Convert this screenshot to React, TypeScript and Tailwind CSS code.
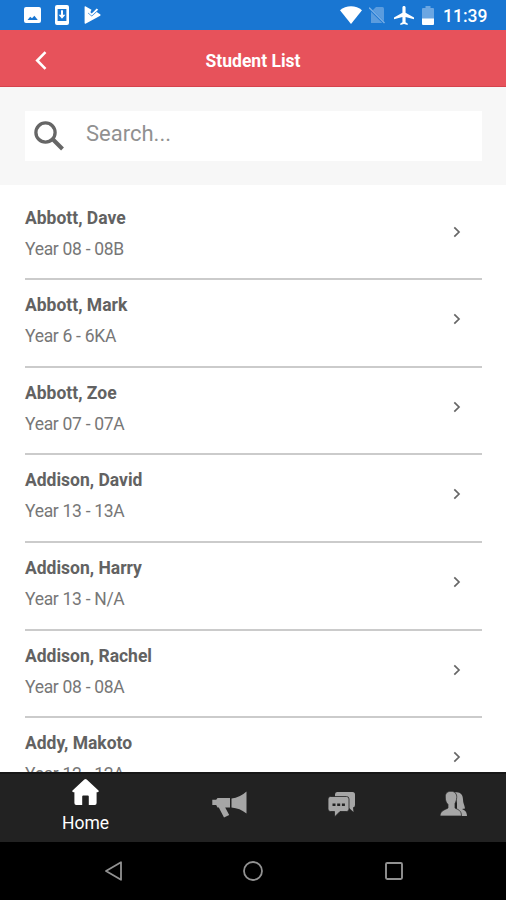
import type { ReactNode } from 'react'

type Student = {
  name: string
  group: string
}

const students: Student[] = [
  { name: 'Abbott, Dave', group: 'Year 08 - 08B' },
  { name: 'Abbott, Mark', group: 'Year 6 - 6KA' },
  { name: 'Abbott, Zoe', group: 'Year 07 - 07A' },
  { name: 'Addison, David', group: 'Year 13 - 13A' },
  { name: 'Addison, Harry', group: 'Year 13 - N/A' },
  { name: 'Addison, Rachel', group: 'Year 08 - 08A' },
  { name: 'Addy, Makoto', group: 'Year 12 - 12A' },
]

function StatusBar() {
  return (
    <div className="flex h-[30px] shrink-0 items-start justify-between bg-[#1976d2] pl-6 pr-[19px] pt-[5px] text-white">
      <div className="flex items-start">
        <svg className="mt-0.5 h-4 w-[17px]" viewBox="0 0 17 16" fill="currentColor">
          <path
            fillRule="evenodd"
            d="M2 0h13a2 2 0 0 1 2 2v12a2 2 0 0 1-2 2H2a2 2 0 0 1-2-2V2a2 2 0 0 1 2-2ZM3.500 13h10.300L10.400 8.800 8 11.300 6.200 9.700Z"
          />
        </svg>
        <svg className="ml-3.5 h-5 w-3.5" viewBox="0 0 14 20" fill="currentColor">
          <path
            fillRule="evenodd"
            d="M2 0h10a2 2 0 0 1 2 2v16a2 2 0 0 1-2 2H2a2 2 0 0 1-2-2V2a2 2 0 0 1 2-2ZM2.600 4v12h8.800V4Z"
          />
          <path d="M6 5.200h2v4.600h2.400L7 13.800 3.600 9.800H6Z" />
        </svg>
        <svg className="ml-[15px] mt-px h-[18px] w-[17px]" viewBox="0 0 17 18" fill="currentColor">
          <path d="M1.300.2 7.500 3.800 5.800 7.500 8 9.200 12.800 4.800 13.300 6.600 16.200 8.300Q17 9 16.200 9.700L1.500 17.800Q.6 18 .6 17V1Q.6 0 1.300.2Z" />
          <path d="m4.300 6.600 3.400 3L13.900 4" fill="none" stroke="#1976d2" strokeWidth="1.300" />
          <path d="m5 5 2.700 2.500 5-5 1.500 1.300-6.500 6-4-3.500Z" />
        </svg>
      </div>
      <div className="flex items-start">
        <svg className="mt-px h-[18px] w-[22px]" viewBox="0 0 22 18" fill="currentColor">
          <path d="M11 18 0 4.200C5.800-1.200 16.200-1.200 22 4.200Z" />
        </svg>
        <svg className="ml-[7px] mt-0.5 h-[17px] w-4" viewBox="0 0 16 17">
          <path d="M7 0h6.500A1.500 1.500 0 0 1 15 1.500V16H2V5Z" fill="#5b9cde" />
          <path d="M0 1 16 17" stroke="#1976d2" strokeWidth="2.400" />
          <path d="M0 .500 15.500 16" stroke="#79afe5" strokeWidth="1.400" />
        </svg>
        <svg className="ml-[9px] mt-px h-[19px] w-5" viewBox="2 2 19 20" preserveAspectRatio="none" fill="currentColor">
          <path d="M21 16v-2l-8-5V3.500c0-.830-.670-1.500-1.500-1.500S10 2.670 10 3.500V9l-8 5v2l8-2.500V19l-2 1.500V22l3.500-1 3.500 1v-1.500L13 19v-5.500l8 2.500z" />
        </svg>
        <svg className="ml-2 mt-px h-[19px] w-3" viewBox="0 0 12 19">
          <path d="M3.500 0h5v2H11a1 1 0 0 1 1 1v10H0V3a1 1 0 0 1 1-1h2.500Z" fill="#6ba6e2" />
          <path d="M0 12.500h12V18a1 1 0 0 1-1 1H1a1 1 0 0 1-1-1Z" fill="currentColor" />
        </svg>
        <span className="ml-[9px] mt-px w-11 whitespace-nowrap text-[17.500px] font-medium leading-5">11:39</span>
      </div>
    </div>
  )
}

function Header() {
  return (
    <header className="grid h-[57px] shrink-0 grid-cols-[1fr_auto_1fr] items-center border-b border-[#d5434d] bg-[#e7525b] pt-1 text-white">
      <svg className="ml-[35px] h-[19px] w-3" viewBox="0 0 12 19" fill="none" stroke="currentColor" strokeWidth="2.600">
        <path d="M10.500 1.200 2.200 9.500 10.500 17.800" />
      </svg>
      <h1 className="pt-0.5 text-[17.500px] font-bold leading-5">Student List</h1>
      <span />
    </header>
  )
}

function SearchBar() {
  return (
    <div className="h-[98px] shrink-0 bg-[#f7f7f7] pl-[25px] pr-6 pt-6">
      <div className="flex h-[50px] items-center bg-white">
        <svg className="ml-[9px] h-[30px] w-[31px]" viewBox="0 0 31 30" fill="none" stroke="#666">
          <circle cx="11.500" cy="11.500" r="9.600" strokeWidth="3.300" />
          <path d="m18.500 18 10 10" strokeWidth="4" />
        </svg>
        <span className="mb-1 ml-[21px] text-[22px] leading-7 text-[#919191]">Search...</span>
      </div>
    </div>
  )
}

function StudentRow({ name, group }: Student) {
  return (
    <li className="flex h-[87.650px] shrink-0 items-start justify-between border-b-2 border-[#cbcbcb]">
      <div className="pt-3.5">
        <p className="text-[17.500px] font-bold leading-[22px] text-[#626262]">{name}</p>
        <p className="mt-[9px] text-[17.500px] leading-[22px] tracking-[-0.3px] text-[#777]">{group}</p>
      </div>
      <svg className="mr-[21px] mt-[33px] h-3 w-2" viewBox="0 0 8 12" fill="none" stroke="#666" strokeWidth="1.700">
        <path d="m1.300 1.300 4.700 4.700-4.700 4.700" />
      </svg>
    </li>
  )
}

function Tab({ children, className }: { children: ReactNode; className: string }) {
  return <div className={`flex shrink-0 flex-col items-center text-[#a6a6a6] ${className}`}>{children}</div>
}

function TabBar() {
  return (
    <nav className="flex h-[70px] shrink-0 border-t-2 border-[#171717] bg-[#222]">
      <Tab className="w-[171px] pt-[5px] text-white">
        <svg className="h-[26px] w-[27px]" viewBox="0 0 27 26" fill="#fff">
          <path d="M12.300.6Q13.500-.4 14.700.6L26.500 11.500Q27.500 13 25.500 13.200H24.600V24Q24.600 26 22.800 26H16.800V17.500Q16.800 16.500 15.800 16.500H11.200Q10.200 16.500 10.200 17.500V26H4.200Q2.400 26 2.400 24V13.200H1.500Q-.5 13 .5 11.500Z" />
        </svg>
        <span className="mt-[7px] text-[17.500px] leading-[22px] text-white">Home</span>
      </Tab>
      <Tab className="w-[116px] pt-[17px]">
        <svg className="h-[27px] w-[35px]" viewBox="0 0 35 27" fill="currentColor">
          <path d="M34.500.5V22.500Q28 17.200 19.500 16.500V7.500Q28 6.500 34.500.5Z" />
          <path d="M5.500 7H18V16.500H13.200L17.200 24 12 26.500 6.800 16.500H5.500L4.200 14H.3V8.800H4.200Z" />
        </svg>
      </Tab>
      <Tab className="w-[108px] pt-[18px]">
        <svg className="h-[25px] w-[27px]" viewBox="0 0 27 25" fill="currentColor">
          <path d="M9 0H24.500Q27 0 27 2.500V13Q27 15.300 25 15.500L25.500 20 20.500 15.500H9Q7 15.500 7 13V2.500Q7 0 9 0Z" />
          <path
            d="M2.500 4.500H18.500Q21 4.500 21 7V17Q21 19.500 18.500 19.500H12L6.500 25V19.500H2.500Q0 19.500 0 17V7Q0 4.500 2.500 4.500Z"
            stroke="#222"
            strokeWidth="0.800"
          />
          <path d="M4.500 11.500h3v2.500h-3ZM9.200 11.500h3v2.500h-3ZM13.900 11.500h3v2.500h-3Z" fill="#222" />
        </svg>
      </Tab>
      <Tab className="w-[111px] pl-1.5 pt-[17px]">
        <svg className="h-[26px] w-[27px]" viewBox="0 0 27 26" fill="currentColor">
          <path d="M15 1.500C20 .5 23 3.800 23 8.500 23 12 24.500 14 25 17.500L22 18C24.500 19 27 20.500 27 25H17V12Z" />
          <path
            d="M11 .3C15 .3 17 3 16.700 6.500 16.500 9.500 15.800 11 15 12.500V17C17.500 18.500 21.500 19 21.500 25H0C.3 19.300 5 19 8 17V13.500C6 11.500 5.300 9 5.300 6 5.300 2 7.500.3 11 .3Z"
            stroke="#222"
            strokeWidth="0.700"
          />
        </svg>
      </Tab>
    </nav>
  )
}

function SystemNav() {
  return (
    <div className="flex h-[58px] shrink-0 items-center justify-between bg-black pl-[105px] pr-[103.500px] text-[#929292]">
      <svg className="h-5 w-[17px]" viewBox="0 0 17 20" fill="none" stroke="currentColor" strokeWidth="1.800" strokeLinejoin="round">
        <path d="M16 1.200V18.800L1 10Z" />
      </svg>
      <svg className="h-5 w-5" viewBox="0 0 20 20" fill="none" stroke="currentColor" strokeWidth="1.800">
        <circle cx="10" cy="10" r="9" />
      </svg>
      <svg className="h-[18px] w-[18px]" viewBox="0 0 18 18" fill="none" stroke="currentColor" strokeWidth="1.900">
        <rect x="1" y="1" width="16" height="16" rx="1.200" />
      </svg>
    </div>
  )
}

export default function App() {
  return (
    <div className="flex h-[900px] w-[506px] flex-col overflow-hidden bg-white font-['Roboto',sans-serif]">
      <StatusBar />
      <Header />
      <SearchBar />
      <ul className="flex min-h-0 flex-1 flex-col overflow-hidden pl-[25px] pr-6 pt-[7.500px]">
        {students.map((student) => (
          <StudentRow key={student.name} {...student} />
        ))}
      </ul>
      <TabBar />
      <SystemNav />
    </div>
  )
}
